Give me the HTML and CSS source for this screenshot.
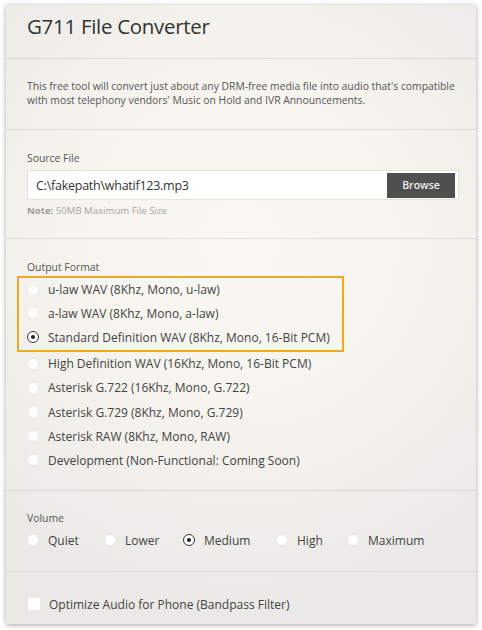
FILE: index.html
```html
<!DOCTYPE html>
<html lang="en">
<head>
  <meta charset="UTF-8" />
  <title>G711 File Converter</title>
  <link rel="stylesheet" href="styles.css">
</head>
<body>
  <div class="card">
    <header class="card-head">
      <h1>G711 File Converter</h1>
    </header>

    <section class="block intro">
      <p>This free tool will convert just about any DRM-free media file into audio that's compatible with most telephony vendors' Music on Hold and IVR Announcements.</p>
    </section>

    <section class="block source">
      <div class="label">Source File</div>
      <div class="file-box">
        <span class="file-name">C:\fakepath\whatif123.mp3</span>
        <button class="browse">Browse</button>
      </div>
      <div class="note"><b>Note:</b> 50MB Maximum File Size</div>
    </section>

    <section class="block formats">
      <div class="label">Output Format</div>
      <div class="highlight">
        <div class="opt"><span class="radio"></span>u-law WAV (8Khz, Mono, u-law)</div>
        <div class="opt"><span class="radio"></span>a-law WAV (8Khz, Mono, a-law)</div>
        <div class="opt"><span class="radio on"></span>Standard Definition WAV (8Khz, Mono, 16-Bit PCM)</div>
      </div>
      <div class="opt"><span class="radio"></span>High Definition WAV (16Khz, Mono, 16-Bit PCM)</div>
      <div class="opt"><span class="radio"></span>Asterisk G.722 (16Khz, Mono, G.722)</div>
      <div class="opt"><span class="radio"></span>Asterisk G.729 (8Khz, Mono, G.729)</div>
      <div class="opt"><span class="radio"></span>Asterisk RAW (8Khz, Mono, RAW)</div>
      <div class="opt"><span class="radio"></span>Development (Non-Functional: Coming Soon)</div>
    </section>

    <section class="block volume">
      <div class="label">Volume</div>
      <div class="vol-row">
        <div class="opt q"><span class="radio"></span>Quiet</div>
        <div class="opt l"><span class="radio"></span>Lower</div>
        <div class="opt m"><span class="radio on"></span>Medium</div>
        <div class="opt h"><span class="radio"></span>High</div>
        <div class="opt"><span class="radio"></span>Maximum</div>
      </div>
    </section>

    <section class="block optimize">
      <div class="opt"><span class="check"></span>Optimize Audio for Phone (Bandpass Filter)</div>
    </section>
  </div>
</body>
</html>
```

FILE: styles.css
```css
* {
  box-sizing: border-box;
  margin: 0;
  padding: 0;
}

body {
  font-family: 'Open Sans', sans-serif;
  background: #fff;
  color: #444;
}

.card {
  margin: 5px 6px;
  width: 470px;
  height: 619px;
  background: radial-gradient(ellipse 80% 60% at 50% 38%, #faf8f2 0%, #f6f4ee 45%, #eae9e6 100%);
  box-shadow: 0 1px 5px rgba(0, 0, 0, 0.35);
  overflow: hidden;
}

.card-head {
  height: 53px;
  padding: 7px 21px 0;
}

.card-head h1 {
  font-weight: 400;
  font-size: 20.5px;
  color: #333;
  letter-spacing: -0.3px;
}

.block {
  border-top: 1px solid #dcdbd8;
  padding: 0 21px;
}

.intro {
  height: 71px;
  padding-top: 20px;
}

.intro p {
  font-size: 10.35px;
  line-height: 14px;
  color: #555;
}

.label {
  font-size: 10.4px;
  color: #555;
  line-height: 14px;
}

.source {
  height: 109px;
  padding: 21px 17px 0 21px;
}

.file-box {
  margin-top: 5px;
  height: 30px;
  background: #fff;
  border: 1px solid #e3e2df;
  display: flex;
  align-items: center;
  justify-content: space-between;
  padding: 0 3px 0 8px;
}

.file-name {
  font-size: 12.5px;
  letter-spacing: -0.25px;
  color: #333;
}

.browse {
  font-family: 'Open Sans', sans-serif;
  width: 68px;
  height: 25px;
  border: none;
  background: #4f4f4f;
  color: #eee;
  font-size: 10.5px;
  font-weight: 600;
}

.note {
  margin-top: 4px;
  font-size: 9.6px;
  color: #a5a5a5;
}

.note b {
  font-weight: 700;
  color: #999;
}

.formats {
  height: 252px;
  padding-top: 21px;
}

.highlight {
  margin: 2px 0 0 -10px;
  width: 327px;
  border: 2px solid #f4a81c;
  padding: 0 0 0 8px;
}

.opt {
  display: flex;
  align-items: center;
  height: 24.2px;
  font-size: 12px;
  color: #444;
  white-space: nowrap;
}

.highlight .opt {
  height: 24.3px;
}

.highlight .opt:first-child {
  height: 23px;
}

.radio {
  width: 12px;
  height: 12px;
  border-radius: 50%;
  background: #fff;
  border: 1px solid #ecebe8;
  margin-right: 9px;
  flex-shrink: 0;
  display: flex;
  align-items: center;
  justify-content: center;
}

.radio.on {
  border: 1px solid #333;
}

.radio.on::after {
  content: '';
  width: 4px;
  height: 4px;
  border-radius: 50%;
  background: #222;
}

.volume {
  height: 81px;
  padding-top: 20px;
}

.vol-row {
  display: flex;
  margin-top: 3px;
}

.vol-row .opt {
  height: 24px;
}

.vol-row .q { width: 77px; }
.vol-row .l { width: 79px; }
.vol-row .m { width: 93px; }
.vol-row .h { width: 71px; }

.optimize {
  padding-top: 20px;
}

.check {
  width: 12px;
  height: 12px;
  background: #fff;
  margin: 0 9px 0 1px;
}
```
